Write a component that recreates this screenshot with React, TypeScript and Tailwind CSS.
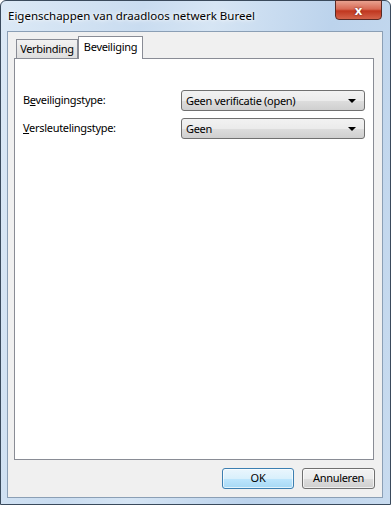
const FONT = "font-['Noto_Sans',sans-serif] text-[11px] tracking-[-0.3px]";

function Combo({ value }: { value: string }) {
  return (
    <div className="relative flex h-[21px] w-[184px] items-center rounded-[3px] border border-[#707070] bg-[linear-gradient(#f2f2f2_0%,#ebebeb_50%,#dddddd_51%,#cfcfcf_100%)] pl-[4px] text-black">
      <span className="leading-none">{value}</span>
      <span className="absolute right-[8px] top-[8px] h-0 w-0 border-x-[4px] border-t-[4px] border-x-transparent border-t-black" />
    </div>
  );
}

function Button({ label, primary }: { label: string; primary?: boolean }) {
  return (
    <div
      className={
        primary
          ? "flex h-[21px] w-[72px] items-center justify-center rounded-[3px] border border-[#3c7fb1] bg-[linear-gradient(#eaf6fd_0%,#d9f0fc_50%,#bee6fd_51%,#a7d9f5_100%)] text-black shadow-[inset_0_0_0_1px_#ffffffaa]"
          : "flex h-[21px] w-[73px] items-center justify-center rounded-[3px] border border-[#707070] bg-[linear-gradient(#f2f2f2_0%,#ebebeb_50%,#dddddd_51%,#cfcfcf_100%)] text-black shadow-[inset_0_0_0_1px_#ffffffaa]"
      }
    >
      {label}
    </div>
  );
}

export default function App() {
  return (
    <div className={`${FONT} h-[505px] w-[391px] overflow-hidden bg-white`}>
      <div className="flex h-[505px] w-[391px] flex-col rounded-t-[6px] border border-[#3a4a5c] bg-[linear-gradient(100deg,#dce9f6_0%,#c9dcf0_30%,#d6e5f4_45%,#bcd3ec_70%,#c8dbef_100%)]">
        {/* title bar */}
        <div className="relative flex h-[30px] shrink-0 items-center pl-[7px]">
          <span className="text-[11.5px] tracking-normal text-black [text-shadow:0_0_6px_#ffffff,0_0_3px_#ffffff]">
            Eigenschappen van draadloos netwerk Bureel
          </span>
          <div className="absolute right-[8px] top-[-1px] flex h-[20px] w-[47px] items-center justify-center rounded-b-[4px] border border-[#5a2a24] bg-[linear-gradient(#e8a18f_0%,#d86a55_45%,#c0371f_55%,#d4634a_100%)]">
            <span className="text-[13px] font-bold leading-none tracking-normal text-white [text-shadow:0_0_2px_#5a1a10]">
              x
            </span>
          </div>
        </div>

        {/* client area */}
        <div className="ml-[6px] mr-[7px] flex h-[467px] flex-col border border-[#8b9fb5] bg-[#f0f0f0]">
          <div className="flex h-[26px] items-end pl-[8px]">
            <div className="flex h-[19px] w-[62px] items-center justify-center border border-b-0 border-[#898c95] bg-[linear-gradient(#f2f2f2,#dedede)] text-black">
              Verbinding
            </div>
            <div className="relative -mb-px flex h-[23px] w-[65px] items-start justify-center border border-b-0 border-[#898c95] bg-white pt-[2px] text-black">
              Beveiliging
            </div>
          </div>
          <div className="ml-[6px] mr-[8px] h-[402px] border border-[#898c95] bg-white">
            <div className="flex flex-col gap-[7px] pl-[8px] pr-[8px] pt-[31px] text-black">
              <div className="flex items-center justify-between">
                <span>
                  B<span className="underline">e</span>veiligingstype:
                </span>
                <Combo value="Geen verificatie (open)" />
              </div>
              <div className="flex items-center justify-between">
                <span>
                  <span className="underline">V</span>ersleutelingstype:
                </span>
                <Combo value="Geen" />
              </div>
            </div>
          </div>
          <div className="flex justify-end gap-[8px] pr-[7px] pt-[8px]">
            <Button label="OK" primary />
            <Button label="Annuleren" />
          </div>
        </div>
      </div>
    </div>
  );
}
